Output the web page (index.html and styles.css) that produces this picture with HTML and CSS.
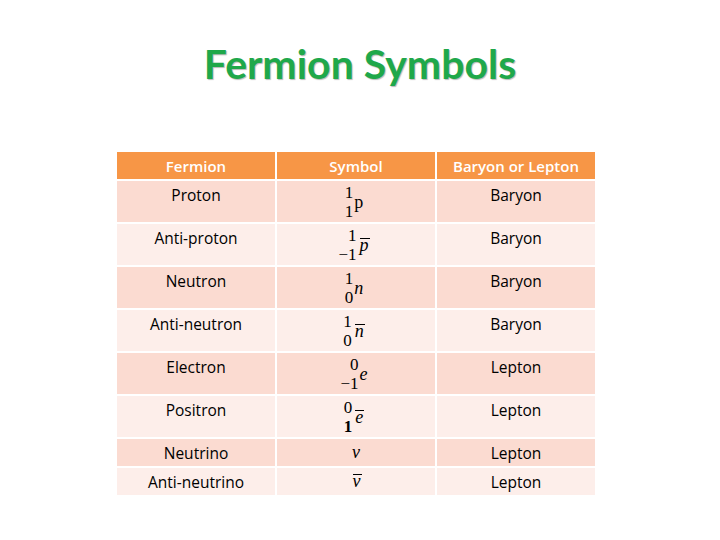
FILE: index.html
```html
<!DOCTYPE html>
<html>
<head>
<meta charset="utf-8">
<link rel="stylesheet" href="styles.css">
</head>
<body>
<h1 class="title">Fermion Symbols</h1>
<table class="fermions">
  <thead>
    <tr class="head"><th>Fermion</th><th>Symbol</th><th>Baryon or Lepton</th></tr>
  </thead>
  <tbody>
    <tr class="tall dark"><td>Proton</td><td class="symcell"><span class="nuc"><span class="nums"><span>1</span><span>1</span></span><span class="sym roman">p</span></span></td><td>Baryon</td></tr>
    <tr class="tall light"><td>Anti-proton</td><td class="symcell"><span class="nuc"><span class="nums"><span>1</span><span>−1</span></span><span class="sym"><span class="bar">p</span></span></span></td><td>Baryon</td></tr>
    <tr class="tall dark"><td>Neutron</td><td class="symcell"><span class="nuc"><span class="nums"><span>1</span><span>0</span></span><span class="sym">n</span></span></td><td>Baryon</td></tr>
    <tr class="tall light"><td>Anti-neutron</td><td class="symcell"><span class="nuc"><span class="nums"><span>1</span><span>0</span></span><span class="sym"><span class="bar">n</span></span></span></td><td>Baryon</td></tr>
    <tr class="tall dark"><td>Electron</td><td class="symcell"><span class="nuc"><span class="nums"><span>0</span><span>−1</span></span><span class="sym">e</span></span></td><td>Lepton</td></tr>
    <tr class="tall light"><td>Positron</td><td class="symcell"><span class="nuc"><span class="nums"><span>0</span><span class="heavy">1</span></span><span class="sym"><span class="bar">e</span></span></span></td><td>Lepton</td></tr>
    <tr class="short dark"><td>Neutrino</td><td class="symcell single"><span class="one">v</span></td><td>Lepton</td></tr>
    <tr class="short light"><td>Anti-neutrino</td><td class="symcell single"><span class="one"><span class="bar">v</span></span></td><td>Lepton</td></tr>
  </tbody>
</table>
</body>
</html>
```
FILE: styles.css
```css
html, body {
  margin: 0;
  padding: 0;
  background: #ffffff;
}
body {
  width: 720px;
  height: 540px;
  font-family: "Open Sans", "Lato", sans-serif;
  color: #000000;
}
.title {
  margin: 0;
  padding-top: 40px;
  height: 103px;
  box-sizing: border-box;
  text-align: center;
  font-family: "Lato", sans-serif;
  font-weight: 700;
  font-size: 41px;
  line-height: 48px;
  color: #1fa84a;
  text-shadow: 1px 1px 1px rgba(0, 0, 0, 0.28);
}
.fermions {
  margin-top: 47px;
  margin-left: 115px;
  border-collapse: separate;
  border-spacing: 2px;
  table-layout: fixed;
  width: 482px;
}
.fermions th,
.fermions td {
  width: 158px;
  padding: 0 2px;
  text-align: center;
  font-size: 15.5px;
  box-sizing: border-box;
}
.head th {
  height: 27px;
  background: #f79646;
  color: #ffffff;
  font-weight: 600;
  font-size: 15px;
  vertical-align: middle;
  line-height: 18px;
}
.tall td {
  height: 41px;
  vertical-align: top;
  padding-top: 5px;
  line-height: 18px;
}
.short td {
  height: 27px;
  vertical-align: middle;
  line-height: 18px;
}
.dark td { background: #fbdbd1; }
.light td { background: #fdeeea; }
.symcell {
  font-family: "Liberation Serif", "DejaVu Serif", serif;
}
.tall .symcell {
  padding-top: 2px;
}
.nuc {
  display: inline-flex;
  align-items: flex-start;
  margin-left: -4px;
}
.nums {
  display: flex;
  flex-direction: column;
  align-items: flex-end;
  font-size: 17px;
  line-height: 19px;
}
.heavy {
  font-weight: 700;
}
.sym {
  margin-top: 10px;
  margin-left: 1px;
  font-size: 18px;
  line-height: 19px;
  font-style: italic;
}
.sym.roman {
  font-style: normal;
}
.bar {
  display: inline-block;
  line-height: 12px;
  border-top: 1px solid #000000;
  padding-top: 0;
  margin-left: 2px;
  padding-right: 1px;
}
.one {
  font-style: italic;
  font-size: 18px;
}
```
